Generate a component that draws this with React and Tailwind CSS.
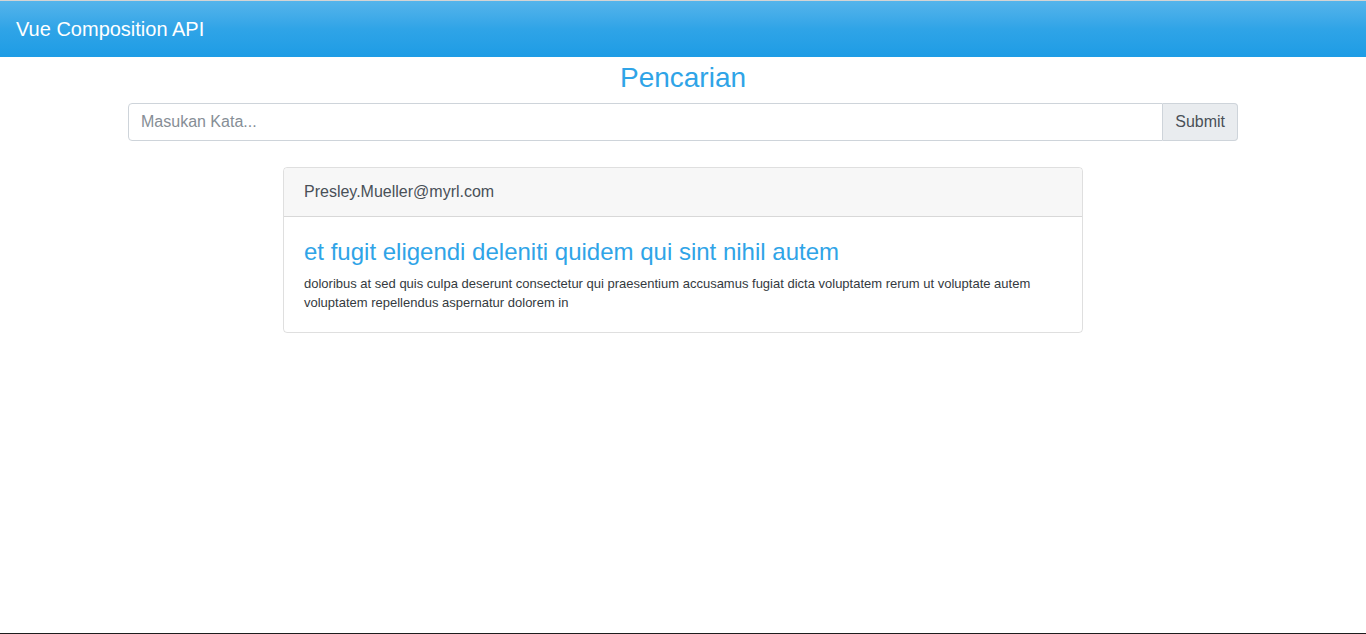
export default function App() {
  return (
    <div
      className="min-h-[634px] flex flex-col bg-white border-t border-t-[#d4d4d4] border-b border-b-[#1e1e1e] text-[#495057]"
      style={{ fontFamily: '"Liberation Sans", Arial, sans-serif' }}
    >
      <nav className="h-[56px] flex items-center px-4 bg-gradient-to-b from-[#54b4eb] via-[#2fa4e7] to-[#1d9ce5]">
        <span className="text-white text-[20px] leading-[30px]">Vue Composition API</span>
      </nav>
      <div className="w-[1110px] mx-auto">
        <h3 className="mt-1 mb-2 text-center text-[28px] leading-[1.2] text-[#2fa4e7]">Pencarian</h3>
        <div className="flex h-[38px]">
          <input
            type="text"
            placeholder="Masukan Kata..."
            className="flex-1 min-w-0 h-[38px] px-3 text-[16px] border border-[#ced4da] rounded-l-[4px] outline-none text-[#495057] placeholder:text-[#868e96]"
          />
          <button className="h-[38px] px-3 text-[16px] bg-[#e9ecef] border border-[#ced4da] border-l-0 rounded-r-[4px] text-[#495057]">
            Submit
          </button>
        </div>
        <div className="w-[800px] mx-auto mt-[26px] border border-[rgba(0,0,0,0.125)] rounded-[4px]">
          <div className="px-5 py-3 text-[16px] leading-[24px] bg-[#f7f7f7] border-b border-b-[rgba(0,0,0,0.125)] rounded-t-[4px]">
            Presley.Mueller@myrl.com
          </div>
          <div className="p-5">
            <h4 className="mt-[1px] mb-2 text-[24px] leading-[1.2] text-[#2fa4e7]">
              et fugit eligendi deleniti quidem qui sint nihil autem
            </h4>
            <p className="text-[13px] leading-[19px] text-[#343a40]">
              doloribus at sed quis culpa deserunt consectetur qui praesentium accusamus fugiat dicta voluptatem rerum ut voluptate autem voluptatem repellendus aspernatur dolorem in
            </p>
          </div>
        </div>
      </div>
    </div>
  );
}
